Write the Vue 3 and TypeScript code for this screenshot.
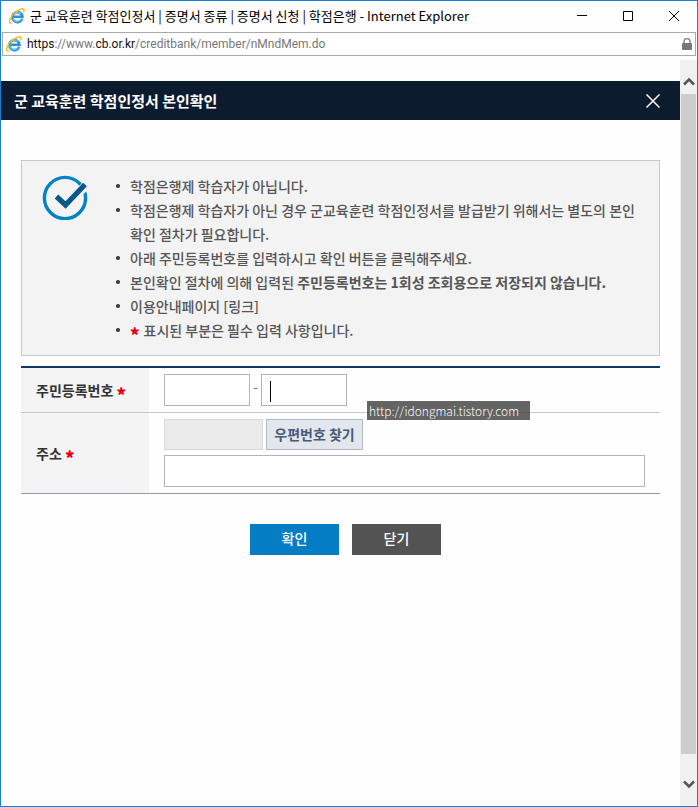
<script setup lang="ts">
import { nextTick, onMounted, ref } from 'vue'

interface Notice {
  text: string
  strong?: string
  required?: boolean
}

const notices: Notice[] = [
  { text: '학점은행제 학습자가 아닙니다.' },
  { text: '학점은행제 학습자가 아닌 경우 군교육훈련 학점인정서를 발급받기 위해서는 별도의 본인 확인 절차가 필요합니다.' },
  { text: '아래 주민등록번호를 입력하시고 확인 버튼을 클릭해주세요.' },
  { text: '본인확인 절차에 의해 입력된 ', strong: '주민등록번호는 1회성 조회용으로 저장되지 않습니다.' },
  { text: '이용안내페이지 [링크]' },
  { text: '표시된 부분은 필수 입력 사항입니다.', required: true },
]

const front = ref('')
const back = ref('')
const zip = ref('')
const address = ref('')
const backInput = ref<HTMLInputElement | null>(null)

onMounted(async () => {
  await nextTick()
  backInput.value?.focus()
})
</script>

<template>
  <div class="window">
    <header class="titlebar">
      <svg class="ie" viewBox="0 0 16 16" aria-hidden="true">
        <path d="M13.2 10.6A5 5 0 1 1 13.4 8.7H4.2" fill="none" stroke="#2f8fd8" stroke-width="2.6" />
        <path d="M12.4 11.2A4.6 4.6 0 0 1 4 10M4.4 6.4A4.6 4.6 0 0 1 12 6" fill="none" stroke="#6cc4f2" stroke-width="1.2" />
        <path d="M2.6 14.9C.4 15.6-.1 13.6 1.3 10.7 3 7 7.6 2.7 11.8 1.2 14.6.2 15.7 1.2 14.7 3.7" fill="none" stroke="#f2bd22" stroke-width="1.5" stroke-linecap="round" />
      </svg>
      <span class="title">군 교육훈련 학점인정서 | 증명서 종류 | 증명서 신청 | 학점은행 - Internet Explorer</span>
      <div class="controls">
        <button type="button" class="ctl" aria-label="최소화">
          <svg viewBox="0 0 10 10"><path d="M0 4.5H10" /></svg>
        </button>
        <button type="button" class="ctl" aria-label="최대화">
          <svg viewBox="0 0 10 10"><path d="M.5.5H9.5V9.5H.5Z" /></svg>
        </button>
        <button type="button" class="ctl" aria-label="창 닫기">
          <svg viewBox="0 0 10 10"><path d="M0 0L10 10M10 0L0 10" /></svg>
        </button>
      </div>
    </header>

    <div class="address">
      <svg class="ie" viewBox="0 0 16 16" aria-hidden="true">
        <path d="M13.2 10.6A5 5 0 1 1 13.4 8.7H4.2" fill="none" stroke="#2f8fd8" stroke-width="2.6" />
        <path d="M12.4 11.2A4.6 4.6 0 0 1 4 10M4.4 6.4A4.6 4.6 0 0 1 12 6" fill="none" stroke="#6cc4f2" stroke-width="1.2" />
        <path d="M2.6 14.9C.4 15.6-.1 13.6 1.3 10.7 3 7 7.6 2.7 11.8 1.2 14.6.2 15.7 1.2 14.7 3.7" fill="none" stroke="#f2bd22" stroke-width="1.5" stroke-linecap="round" />
      </svg>
      <span class="url"><b>https</b>://www.<b>cb.or.kr</b>/creditbank/member/nMndMem.do</span>
      <svg class="lock" viewBox="0 0 10 13" aria-hidden="true">
        <path d="M2 6V3.6A3 3 0 0 1 8 3.6V6" fill="none" stroke="#858585" stroke-width="1.5" />
        <rect x="0" y="5" width="10" height="7" rx="1" fill="#777" />
      </svg>
    </div>

    <div class="viewport">
      <main class="page">
        <div class="heading">
          <h1>군 교육훈련 학점인정서 본인확인</h1>
          <button type="button" class="dismiss" aria-label="닫기">
            <svg viewBox="0 0 14 14"><path d="M.5.5L13.5 13.5M13.5.5L.5 13.5" /></svg>
          </button>
        </div>

        <div class="content">
          <section class="notice">
            <svg class="check" viewBox="0 0 46 46" aria-hidden="true">
              <circle cx="23" cy="24" r="20.6" fill="none" stroke="#0581c8" stroke-width="3.4" />
              <path d="M14 22L23.5 31.5L46 9.5" fill="none" stroke="#f3f3f3" stroke-width="9" />
              <path d="M14.5 22.5L23.5 31L43 10.5" fill="none" stroke="#06578a" stroke-width="5.2" />
            </svg>
            <ul>
              <li v-for="notice in notices" :key="notice.text">
                <span v-if="notice.required" class="star">*</span>{{ notice.text }}<strong v-if="notice.strong">{{ notice.strong }}</strong>
              </li>
            </ul>
          </section>

          <form @submit.prevent>
            <table>
              <tbody>
                <tr>
                  <th scope="row"><label for="front">주민등록번호</label> <span class="star">*</span></th>
                  <td>
                    <div class="line">
                      <input id="front" v-model="front" class="field short" type="text" maxlength="6" />
                      <span class="dash">-</span>
                      <div class="caret-box">
                        <input ref="backInput" v-model="back" class="field short" type="text" maxlength="7" aria-label="주민등록번호 뒷자리" />
                        <i v-if="!back" class="caret"></i>
                      </div>
                    </div>
                    <span class="watermark">http://idongmai.tistory.com</span>
                  </td>
                </tr>
                <tr>
                  <th scope="row"><label for="address">주소</label> <span class="star">*</span></th>
                  <td>
                    <div class="line zipline">
                      <input v-model="zip" class="field zip" type="text" readonly aria-label="우편번호" />
                      <button type="button" class="find">우편번호 찾기</button>
                    </div>
                    <input id="address" v-model="address" class="field full" type="text" />
                  </td>
                </tr>
              </tbody>
            </table>
            <div class="actions">
              <button type="submit" class="action primary">확인</button>
              <button type="button" class="action">닫기</button>
            </div>
          </form>
        </div>
      </main>

      <div class="scrollbar" aria-hidden="true">
        <svg class="arrow" viewBox="0 0 12 9"><path d="M1 7.5L6 2.5L11 7.5" /></svg>
        <div class="thumb"></div>
        <svg class="arrow" viewBox="0 0 12 9"><path d="M1 1.5L6 6.5L11 1.5" /></svg>
      </div>
    </div>
  </div>
</template>

<style>
body {
  background: #fdfdfd;
}
</style>

<style scoped>
* {
  box-sizing: border-box;
}

.window {
  display: flex;
  flex-direction: column;
  min-height: 100vh;
  border: 1px solid #1a7fd4;
  background: #fefefe;
  font-family: "Noto Sans CJK KR", sans-serif;
}

button,
input {
  margin: 0;
  padding: 0;
  border: 0;
  font: inherit;
}

.titlebar {
  display: flex;
  align-items: center;
  height: 30px;
  padding-left: 8px;
}

.ie {
  flex: none;
  width: 16px;
  height: 16px;
}

.title {
  flex: 1;
  margin-left: 5px;
  color: #000;
  font-size: 13px;
  line-height: 18px;
  white-space: nowrap;
}

.controls {
  display: flex;
}

.ctl {
  display: grid;
  place-items: center;
  width: 46px;
  height: 28px;
  background: none;
}

.ctl svg {
  width: 10px;
  height: 10px;
  fill: none;
  stroke: #000;
  stroke-width: 1;
  overflow: visible;
}

.address {
  display: flex;
  align-items: center;
  height: 24px;
  margin: 1px 1px 4px;
  padding: 0 3px;
  border: 1px solid #aaa;
  background: #fff;
}

.url {
  flex: 1;
  margin-left: 5px;
  color: #777;
  font-family: Roboto, "Noto Sans CJK KR", sans-serif;
  font-size: 12px;
  line-height: 20px;
}

.url b {
  color: #111;
  font-weight: 400;
}

.lock {
  width: 10px;
  height: 13px;
}

.viewport {
  display: flex;
  flex: 1;
}

.page {
  flex: 1;
  min-width: 0;
  padding-top: 21px;
}

.heading {
  display: flex;
  align-items: center;
  justify-content: space-between;
  height: 39px;
  padding: 0 20px 0 13px;
  background: #0c1b2d;
}

h1 {
  margin: 0;
  color: #fff;
  font-size: 15px;
  font-weight: 700;
  line-height: 24px;
}

.dismiss {
  display: grid;
  width: 14px;
  height: 14px;
  background: none;
}

.dismiss svg {
  width: 14px;
  height: 14px;
  fill: none;
  stroke: #fff;
  stroke-width: 1.5;
}

.content {
  padding: 40px 20px;
}

.notice {
  display: flex;
  align-items: flex-start;
  gap: 24px;
  padding: 13px 24px 13px 20px;
  border: 1px solid #c8c8c8;
  background: #f3f3f3;
}

.check {
  flex: none;
  width: 46px;
  height: 46px;
}

ul {
  flex: 1;
  margin: 0;
  padding: 0;
  list-style: none;
}

li {
  position: relative;
  padding-left: 18px;
  color: #555;
  font-size: 14px;
  font-weight: 500;
  line-height: 24px;
}

li::before {
  content: "";
  position: absolute;
  top: 10px;
  left: 4px;
  width: 4px;
  height: 4px;
  border-radius: 50%;
  background: #333;
}

li strong {
  font-weight: 700;
}

.star {
  display: inline-block;
  height: 20px;
  color: #e60012;
  font-size: 18px;
  font-weight: 900;
  line-height: 24px;
  vertical-align: middle;
}

li .star {
  margin-right: 4px;
}

table {
  width: 100%;
  margin-top: 10px;
  border-collapse: separate;
  border-spacing: 0;
  border-top: 2px solid #12356b;
  border-bottom: 1px solid #8d9bb5;
}

th,
td {
  padding: 6px 15px;
}

th {
  width: 128px;
  background: #f4f4f4;
  color: #333;
  font-size: 14px;
  font-weight: 700;
  line-height: 24px;
  text-align: left;
  white-space: nowrap;
}

td {
  position: relative;
}

tr:first-child th,
tr:first-child td {
  border-bottom: 1px solid #c8c8c8;
}

.line {
  display: flex;
}

.zipline {
  gap: 3px;
  margin-bottom: 5px;
}

.field {
  display: block;
  height: 32px;
  padding: 0 8px;
  border: 1px solid #b4b4b4;
  background: #fff;
  font-size: 14px;
  outline: none;
}

.short {
  width: 86px;
  caret-color: transparent;
}

.zip {
  width: 99px;
  height: 31px;
  border-color: #d9d9d9;
  background: #eaeaea;
}

.full {
  width: 100%;
}

.dash {
  width: 11px;
  color: #777;
  font-size: 14px;
  line-height: 24px;
  text-align: center;
}

.caret-box {
  position: relative;
}

.caret {
  position: absolute;
  top: 7px;
  left: 9px;
  width: 1px;
  height: 21px;
  background: #000;
}

.watermark {
  position: absolute;
  top: 33px;
  left: 218px;
  z-index: 1;
  width: 163px;
  padding-left: 2px;
  background: rgba(70, 70, 70, 0.84);
  color: #fff;
  font-size: 12px;
  font-weight: 300;
  line-height: 19px;
  white-space: nowrap;
}

.find {
  width: 97px;
  height: 31px;
  padding-bottom: 2px;
  border: 1px solid #b0b8c9;
  background: #e2e6ed;
  color: #4a5a78;
  font-size: 14px;
  font-weight: 700;
  line-height: 24px;
}

.actions {
  display: flex;
  justify-content: center;
  gap: 13px;
  margin-top: 30px;
  padding-left: 10px;
}

.action {
  width: 89px;
  height: 31px;
  padding-bottom: 3px;
  background: #535353;
  color: #fff;
  font-size: 14px;
  font-weight: 500;
  line-height: 24px;
}

.primary {
  background: #047dc5;
}

.scrollbar {
  display: flex;
  flex-direction: column;
  align-items: center;
  width: 17px;
  padding: 17px 1px;
  background: #f0f0f0;
}

.arrow {
  flex: none;
  width: 12px;
  height: 9px;
  fill: none;
  stroke: #555;
  stroke-width: 2.5;
}

.thumb {
  flex: 1;
  width: 100%;
  margin: 8px 0 26px;
  background: #cdcdcd;
}
</style>
